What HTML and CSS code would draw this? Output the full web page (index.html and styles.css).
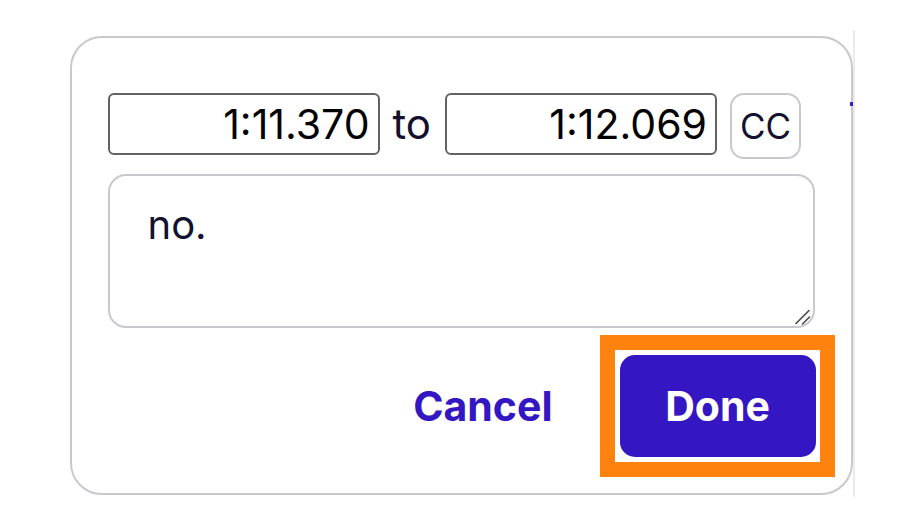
FILE: index.html
```html
<!DOCTYPE html>
<html lang="en">
<head>
<meta charset="utf-8">
<title>Edit caption</title>
<link rel="stylesheet" href="styles.css">
</head>
<body>
<div class="stage">
  <div class="card">
    <div class="times">
      <input class="time" type="text" value="1:11.370">
      <span class="to">to</span>
      <input class="time" type="text" value="1:12.069">
      <button class="cc" type="button">CC</button>
    </div>
    <div class="text-wrap">
      <textarea class="text">no.</textarea>
      <svg class="grip" width="16" height="16" viewBox="0 0 16 16" aria-hidden="true">
        <path d="M1 14.5 L14 1.5 M7.5 15 L14.5 8" stroke="#4a4a4a" stroke-width="1.6" stroke-linecap="round" fill="none"/>
      </svg>
    </div>
    <div class="actions">
      <button class="cancel" type="button">Cancel</button>
      <span class="focus-ring"><button class="done" type="button">Done</button></span>
    </div>
  </div>
  <div class="rail"><span class="dot"></span></div>
</div>
</body>
</html>
```

FILE: styles.css
```css
html, body {
  margin: 0;
  padding: 0;
  background: #ffffff;
}

body {
  font-family: Inter, "Noto Sans", sans-serif;
  width: 904px;
  height: 524px;
  overflow: hidden;
}

.stage {
  display: flex;
  align-items: flex-start;
  padding: 36px 0 0 70px;
}

.card {
  box-sizing: border-box;
  width: 783px;
  height: 459px;
  border: 2.5px solid #c9c8cd;
  border-radius: 32px;
  padding: 54.5px 35.5px 0 35.5px;
  display: flex;
  flex-direction: column;
}

.times {
  display: flex;
  align-items: flex-start;
}

.time {
  box-sizing: border-box;
  width: 272px;
  height: 62px;
  margin: 0;
  border: 2px solid #636363;
  border-radius: 6px;
  padding: 0 8px 0 8px;
  font-family: Inter, sans-serif;
  font-size: 41px;
  color: #000000;
  text-align: right;
  background: #ffffff;
  outline: none;
}

.to {
  font-size: 42px;
  color: #14112e;
  line-height: 62px;
  margin: 0 14px 0 13px;
}

.cc {
  box-sizing: border-box;
  width: 71px;
  height: 66px;
  margin-left: 13px;
  border: 2.5px solid #c9c8cd;
  border-radius: 14px;
  background: #ffffff;
  color: #14112e;
  font-family: Inter, sans-serif;
  font-size: 35px;
  padding: 0;
}

.text-wrap {
  position: relative;
  width: 707px;
  height: 154px;
  margin-top: 15px;
}

.text {
  box-sizing: border-box;
  display: block;
  width: 707px;
  height: 154px;
  margin: 0;
  border: 2.5px solid #c9c8cd;
  border-radius: 18px;
  padding: 24px 38px 20px;
  font-family: Inter, sans-serif;
  font-size: 40px;
  color: #14112e;
  resize: none;
  outline: none;
}

.grip {
  position: absolute;
  right: 4px;
  bottom: 3px;
}

.actions {
  display: flex;
  justify-content: flex-end;
  align-items: center;
  margin-top: 7px;
  margin-right: -19px;
}

.cancel {
  border: none;
  background: none;
  padding: 0;
  margin-right: 47px;
  font-family: Inter, sans-serif;
  font-weight: 700;
  font-size: 41px;
  color: #3416c2;
}

.focus-ring {
  display: block;
  border: 15px solid #fd820e;
  padding: 5px 4px 5px 5px;
}

.done {
  box-sizing: border-box;
  display: block;
  width: 196px;
  height: 102px;
  border: none;
  border-radius: 15px;
  background: #3416c2;
  color: #ffffff;
  font-family: Inter, sans-serif;
  font-weight: 700;
  font-size: 41px;
  outline: none;
}

.rail {
  position: relative;
  width: 2px;
  height: 467px;
  margin-top: -6px;
  background: #ebebed;
}

.dot {
  position: absolute;
  left: -3px;
  top: 72px;
  width: 3px;
  height: 4px;
  background: #3a1bd0;
}
```
